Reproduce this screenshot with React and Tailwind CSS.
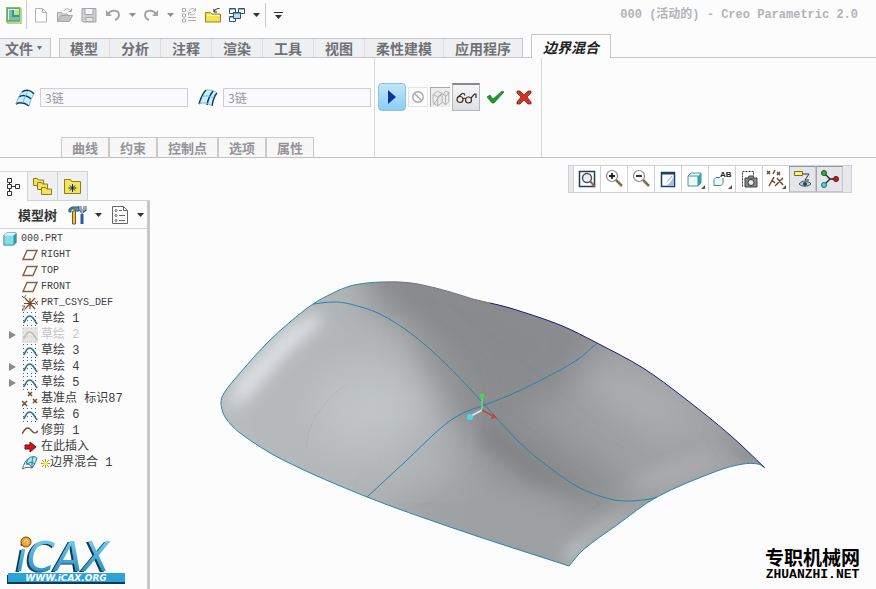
import { clsx } from 'clsx';

const Icon = ({ size = 16, children, className }) => (
  <svg
    width={size}
    height={size}
    viewBox="0 0 16 16"
    fill="none"
    stroke="currentColor"
    className={clsx('shrink-0', className)}
    aria-hidden="true"
  >
    {children}
  </svg>
);

const Caret = ({ label, className }) => (
  <button type="button" aria-label={label} className={clsx('flex w-3.5 h-6 items-center justify-center', className)}>
    <svg width="7" height="4" viewBox="0 0 7 4" fill="currentColor" aria-hidden="true">
      <path d="M0 0h7L3.5 4z" />
    </svg>
  </button>
);

const ToolButton = ({ label, children }) => (
  <button type="button" aria-label={label} className="flex w-6 h-6 items-center justify-center">
    {children}
  </button>
);

/* ---------- Title bar ---------- */

const AppLogo = () => (
  <svg width="16" height="17" viewBox="0 0 16 17" className="shrink-0" aria-hidden="true">
    <path d="M0 0h14l2 2v15H2l-2-2z" fill="#8cc152" />
    <path d="M14 1l2 1v15H3l-2-2h13z" fill="#b5d98b" />
    <rect x="1" y="1" width="13" height="13" fill="#5f9fae" />
    <rect x="2" y="2" width="11" height="11" fill="#e7f3d0" />
    <path d="M3 3h3v7h7v3H3z" fill="#7cc0a0" />
    <rect x="6" y="3" width="7" height="7" fill="#2f93b4" />
    <rect x="8" y="3" width="5" height="5" fill="#c9e26c" />
  </svg>
);

const TitleBar = () => (
  <header className="flex h-[30px] items-center pl-1.5 pr-[18px]">
    <AppLogo />
    <span className="ml-1 mr-0.5 h-7 w-px bg-[#c9cbce]" />
    <ToolButton label="新建">
      <Icon className="text-[#b3b3b6]">
        <path d="M2.500 1.500h7l4 4v9.500h-11z" fill="#fff" />
        <path d="M9.500 1.500v4h4" />
      </Icon>
    </ToolButton>
    <ToolButton label="打开">
      <Icon className="text-[#a9a9ac]">
        <path d="M.5 14.500v-9h4l1 1.500h5v2" fill="#d5d5d8" />
        <path d="M.5 14.500l3-6h12l-3 6z" fill="#c3c3c6" />
        <path d="M7 4c1-3 5-3 7 0M14.500 1.500V4.500h-3" />
      </Icon>
    </ToolButton>
    <ToolButton label="保存">
      <Icon className="text-[#a6a6a9]">
        <path d="M1 1.500h14v13.500H2L1 14z" fill="#d0d0d3" />
        <path d="M4 1.500h8v6H4z" fill="#f6f6f8" />
        <path d="M5 10.500h7v4H5z" fill="#e8e8ea" />
      </Icon>
    </ToolButton>
    <ToolButton label="撤消">
      <Icon className="text-[#a6a6a9]">
        <path d="M3 7c3-5 11-4 11 1 0 3-2 4-4 5" strokeWidth="2" />
        <path d="M1 3v6h6z" fill="currentColor" stroke="none" />
      </Icon>
    </ToolButton>
    <Caret label="撤消列表" className="text-[#8f8f92]" />
    <ToolButton label="重做">
      <Icon className="text-[#a6a6a9]">
        <path d="M13 7C10 2 2 3 2 8c0 3 2 4 4 5" strokeWidth="2" />
        <path d="M15 3v6H9z" fill="currentColor" stroke="none" />
      </Icon>
    </ToolButton>
    <Caret label="重做列表" className="text-[#8f8f92]" />
    <ToolButton label="重新生成">
      <Icon className="text-[#adadb0]">
        <path d="M1.500 1.500h3v3h-3zM1.500 7h3v3h-3zM1.500 12h3v3h-3zM7 10.500h8M7 13.500h8" />
        <path d="M8 4c1-3 5-3 6-1M14.500 1v3h-3M14 6c-1 2.500-5 2.500-6 .5M7.500 8.500v-3h3" />
      </Icon>
    </ToolButton>
    <ToolButton label="关闭">
      <Icon className="text-[#9a8424]">
        <path d="M.5 15V5.500h5L7 7h8.500v8z" fill="#f6e04d" />
        <path d="M2 8.500h12" stroke="#fff7a8" />
        <path d="M9 4.500c1-2 3-3 5.500-3M9 2v3h3" stroke="#222" />
      </Icon>
    </ToolButton>
    <ToolButton label="窗口">
      <Icon className="text-[#2e5577]">
        <path d="M.5 1.500h6v5h-6z" fill="#fff" />
        <path d="M9.500 1.500h6v5h-6z" fill="#fff" />
        <path d="M.5 9.500h6v5h-6z" fill="#fff" />
        <path d="M.5 2h6M9.500 2h6M.5 10h6" />
        <path d="M4.500 5.500h7v6h-7z" fill="#b9dcf2" />
        <path d="M4.500 6h7" />
      </Icon>
    </ToolButton>
    <Caret label="窗口列表" className="text-[#333]" />
    <span className="mx-0.5 h-6 w-px bg-[#c9cbce]" />
    <button type="button" aria-label="自定义快速访问工具栏" className="flex h-6 w-5 items-center justify-center text-[#333]">
      <svg width="9" height="7" viewBox="0 0 9 7" fill="currentColor" aria-hidden="true">
        <path d="M0 0h9v1H0zM1 3h7L4.500 7z" />
      </svg>
    </button>
    <h1 className="ml-auto whitespace-nowrap font-['Liberation_Mono','Noto_Sans_CJK_SC',monospace] text-xs font-bold text-[#b4b4b8]">
      000 (活动的) - Creo Parametric 2.0
    </h1>
  </header>
);

/* ---------- Ribbon ---------- */

const ribbonTabs = ['模型', '分析', '注释', '渲染', '工具', '视图', '柔性建模', '应用程序'];
const panelTabs = ['曲线', '约束', '控制点', '选项', '属性'];

const RibbonTabs = () => (
  <nav className="flex h-7 items-end border-b border-[#c4c6c8] text-sm font-bold text-[#707075]">
    <button type="button" className="flex h-[19px] items-center gap-1 border border-b-0 border-l-0 border-[#c4c6c8] bg-[#eff0f2] pl-[5px] pr-2 leading-none">
      文件
      <svg width="5" height="4" viewBox="0 0 5 4" fill="currentColor" aria-hidden="true">
        <path d="M0 0h5L2.500 4z" />
      </svg>
    </button>
    <div className="ml-2 flex border border-b-0 border-[#c4c6c8]">
      {ribbonTabs.map((tab) => (
        <button
          key={tab}
          type="button"
          className="h-[18px] whitespace-nowrap border-l border-[#dcdee0] bg-[#eff0f2] px-[11px] leading-none first:border-l-0 first:pl-2.5"
        >
          {tab}
        </button>
      ))}
    </div>
    <button
      type="button"
      className="-mb-px ml-2 h-6 whitespace-nowrap border border-b-0 border-[#c4c6c8] bg-[#fcfcfc] px-[11px] leading-none italic text-[#222]"
    >
      边界混合
    </button>
  </nav>
);

const ChainIcon = ({ flip }) => (
  <svg width="20" height="18" viewBox="0 0 20 18" fill="none" className="shrink-0" aria-hidden="true">
    {flip ? (
      <>
        <path d="M1 15C3 8 5 4 8 1c4 0 8 0 11 3-3 3-4 7-5 13-3-3-8-4-13-2z" fill="#c5f1fa" />
        <path d="M1 15C3 8 5 4 8 1M9 16c1-6 3-10 6-14M14 17c1-6 2-10 5-13" stroke="#123b5c" strokeWidth="1.500" />
        <path d="M8 1c4 0 8 0 11 3M4 8c4-2 8-1 12 1M1 15c5-2 9-1 13 2" stroke="#7db6c8" />
      </>
    ) : (
      <>
        <path d="M1 15c2-6 4-11 6-13 4-2 10-2 12 3-2 3-4 7-5 12-4-3-8-4-13-2z" fill="#c5f1fa" />
        <path d="M7 3c4-3 9-2 12 2M4 8c4-3 9-1 12 2M1 15c4-2 9-1 13 2" stroke="#123b5c" strokeWidth="1.500" />
        <path d="M1 15C3 9 5 5 7 3M8 14c1-5 3-9 5-12M14 17c1-5 3-9 5-12" stroke="#7db6c8" />
      </>
    )}
  </svg>
);

const ChainField = ({ id, label, flip }) => (
  <div className="flex flex-1 items-center gap-[5px]">
    <label htmlFor={id} aria-label={label}>
      <ChainIcon flip={flip} />
    </label>
    <input
      id={id}
      defaultValue="3链"
      className="h-[19px] w-full min-w-0 border border-[#cdcfd2] bg-[#faf9fe] px-1 font-['Noto_Sans_CJK_SC',sans-serif] text-xs leading-none text-[#98989c]"
    />
  </div>
);

const Dashboard = () => (
  <section className="flex h-[100px] border-b border-[#bfc1c3]">
    <div className="flex w-[375px] flex-col justify-between border-r border-[#d6d8da]">
      <div className="flex gap-2.5 pl-[15px] pr-[3px] pt-[30px]">
        <ChainField id="chain-first" label="第一方向链" />
        <ChainField id="chain-second" label="第二方向链" flip />
      </div>
      <div className="flex pl-[61px]">
        {panelTabs.map((tab) => (
          <button
            key={tab}
            type="button"
            className="h-5 whitespace-nowrap border border-b-0 border-[#c8cacc] bg-[#f7f7f8] px-[10px] text-[13px] font-bold leading-none text-[#949498]"
          >
            {tab}
          </button>
        ))}
      </div>
    </div>
    <div className="flex w-[167px] items-start border-r border-[#d6d8da] pl-[3px] pt-[25px]">
      <button type="button" aria-label="继续" className="flex size-7 items-center justify-center rounded-sm border border-[#8cc4e8] bg-gradient-to-b from-[#c3e5fa] to-[#8ccdf4]">
        <svg width="8" height="14" viewBox="0 0 8 14" aria-hidden="true">
          <path d="M0 0l8 7-8 7z" fill="#0c3590" />
        </svg>
      </button>
      <button type="button" aria-label="无预览" className="mt-1 ml-0.5 flex size-5 items-center justify-center border border-[#e3e3e5] text-[#a3a3a6]">
        <Icon size={14}>
          <circle cx="8" cy="8" r="6" strokeWidth="1.500" />
          <path d="M4 4l8 8" strokeWidth="1.500" />
        </Icon>
      </button>
      <button type="button" aria-label="分离" className="mt-1 ml-0.5 flex size-5 items-center justify-center border border-r-0 border-b-0 border-[#a9a9ac] bg-[#ededee] text-[#aaaaad]">
        <Icon size={18}>
          <path d="M1 5l4-3 4 2v8l-4 3-4-3zM1 5l4 2 4-3M5 7v8M10 5l2-3 3 1v8l-3 3-3-3M10 5l3 1 2-3M12 6v8M1 14L9 4" strokeWidth=".8" />
        </Icon>
      </button>
      <button type="button" aria-label="预览" className="ml-0.5 flex size-7 items-center justify-center border border-t-2 border-[#b5b6ba] border-t-[#88888c] bg-gradient-to-b from-[#f7f7f8] to-[#dedfe3]">
        <svg width="21" height="12" viewBox="0 0 21 12" fill="none" stroke="#3d2e22" strokeWidth="1.200" aria-hidden="true">
          <circle cx="4" cy="7.500" r="3" />
          <circle cx="12.500" cy="8" r="3" />
          <path d="M7 7c.5-1 2-1 2.500 0M1.500 5.500L6 1.500h2l1 2M15 6l3.500-4h1.500v4" />
        </svg>
      </button>
      <button type="button" aria-label="确定" className="ml-px flex size-7 items-center justify-center">
        <svg width="17" height="14" viewBox="0 0 17 14" aria-hidden="true">
          <path d="M0 7l3-2 3 4 9-8 2 1L7 13H5z" fill="#1f9a2e" stroke="#0c6a1a" strokeWidth=".6" />
        </svg>
      </button>
      <button type="button" aria-label="取消" className="ml-px flex size-7 items-center justify-center">
        <svg width="16" height="15" viewBox="0 0 16 15" aria-hidden="true">
          <path d="M1 1h3l4 4 4-4h3v2l-4 4 4 5v2h-3L8 10l-4 4H1v-2l4-5-4-4z" fill="#d23324" stroke="#8c1c14" strokeWidth=".8" />
        </svg>
      </button>
    </div>
  </section>
);

/* ---------- Model tree ---------- */

const CubeIcon = () => (
  <Icon size={14}>
    <path d="M1 4l3-3h11v11l-3 3H1z" fill="#86dde6" stroke="#3c7d8a" />
    <path d="M12 4l3-3v11l-3 3z" fill="#2e98a8" stroke="none" />
    <path d="M1 4l3-3h11l-3 3z" fill="#d3f7fa" stroke="none" />
  </Icon>
);

const PlaneIcon = () => (
  <Icon>
    <path d="M5 3.500h10L11 12.500H1z" fill="#fff" stroke="#8a6142" strokeWidth="1.400" />
  </Icon>
);

const CsysIcon = () => (
  <Icon>
    <path d="M3 3l10 11M13 3L3 14M2 8.500h11M8 3v11" stroke="#7a4a28" strokeWidth="1.200" />
    <path d="M0 1l2 2 2-3M13 6l3 4M16 6l-3 4M0 11h3l-3 4h3" stroke="#444" strokeWidth=".8" />
  </Icon>
);

const SketchIcon = ({ muted }) => (
  <Icon className={muted ? 'bg-[#e6e6e3]' : ''}>
    <path
      d="M1 1.500h15M1 5.500h15M1 9.500h15M1 14.500h15"
      stroke={muted ? '#c9c9c6' : '#3b6688'}
      strokeDasharray="1 3"
    />
    <path d="M1.500 12C4 9 4 5.500 7 5c4-.5 5 4 8 8" stroke={muted ? '#bcbcb9' : '#2c6f98'} strokeWidth="1.600" />
  </Icon>
);

const PointsIcon = () => (
  <Icon>
    <path d="M6 1l4 4M10 1L6 5M0 10l5 5M5 10l-5 5M11 8l4 4M15 8l-4 4" stroke="#7a4a28" strokeWidth="1.500" />
  </Icon>
);

const TrimIcon = () => (
  <Icon>
    <path d="M0 11C2 7 5 3 8 6s4 6 8 2" stroke="#73512f" strokeWidth="1.400" />
  </Icon>
);

const InsertIcon = () => (
  <Icon>
    <path d="M3 6h5V3l6 5-6 5v-3H3z" fill="#d01616" stroke="#721010" />
  </Icon>
);

const BlendIcon = () => (
  <Icon>
    <path d="M6 4c3-3 7-3 9-1-1 3-2 6-5 10-1-3-3-4-6-4z" fill="#9fe8ee" stroke="#3f7884" />
    <path d="M.5 14C2 9 3 6 6 4M.5 14c3-2 6-2 9.500-1M5 9c3-2 5-2 8 0M10 13c0-5 0-8 1-11" stroke="#3f7884" />
  </Icon>
);

const features = [
  { name: 'RIGHT', icon: <PlaneIcon />, latin: true },
  { name: 'TOP', icon: <PlaneIcon />, latin: true },
  { name: 'FRONT', icon: <PlaneIcon />, latin: true },
  { name: 'PRT_CSYS_DEF', icon: <CsysIcon />, latin: true },
  { name: '草绘 1', icon: <SketchIcon /> },
  { name: '草绘 2', icon: <SketchIcon muted />, expandable: true, muted: true },
  { name: '草绘 3', icon: <SketchIcon /> },
  { name: '草绘 4', icon: <SketchIcon />, expandable: true },
  { name: '草绘 5', icon: <SketchIcon />, expandable: true },
  { name: '基准点 标识87', icon: <PointsIcon /> },
  { name: '草绘 6', icon: <SketchIcon /> },
  { name: '修剪 1', icon: <TrimIcon /> },
  { name: '在此插入', icon: <InsertIcon /> },
  { name: '边界混合 1', icon: <BlendIcon />, pending: true },
];

const TreeRow = ({ feature }) => (
  <li className={clsx('flex h-4 items-center pl-[7px]', feature.muted ? 'text-[#c4c4c6]' : 'text-[#3c3c40]')}>
    {feature.expandable ? (
      <button type="button" aria-label="展开" className="flex w-[15px] items-center pl-0.5">
        <svg width="7" height="8" viewBox="0 0 7 8" fill="#8c8c8f" aria-hidden="true">
          <path d="M0 0l7 4-7 4z" />
        </svg>
      </button>
    ) : (
      <span className="w-[15px]" />
    )}
    {feature.icon}
    <span className={clsx('ml-[3px] flex items-center whitespace-nowrap leading-4', feature.latin && 'text-[10px]')}>
      {feature.pending && (
        <svg width="9" height="9" viewBox="0 0 9 9" stroke="#b59a1c" aria-hidden="true">
          <path d="M4.500 0v9M0 4.500h9M1 1l7 7M8 1L1 8" />
          <circle cx="4.500" cy="4.500" r="2" fill="#ffe840" stroke="none" />
        </svg>
      )}
      {feature.name}
    </span>
  </li>
);

const FolderShape = ({ x = 0, y = 0 }) => (
  <path
    transform={`translate(${x} ${y})`}
    d="M.5 8.500v-7h4l1 1.500h5v5.500z"
    fill="#f5e35a"
    stroke="#8f7a1e"
  />
);

const IcaxLogo = () => (
  <svg width="124" height="60" viewBox="0 0 124 60" className="ml-1" role="img" aria-label="iCAX">
    <defs>
      <linearGradient id="icaxFill" x1="0" y1="0" x2="0" y2="1">
        <stop offset="0" stopColor="#7fd6f4" />
        <stop offset="1" stopColor="#1684bd" />
      </linearGradient>
      <filter id="icaxShadow" x="-10%" y="-10%" width="120%" height="130%">
        <feDropShadow dx="-2" dy="1" stdDeviation="0.4" floodColor="#17384c" />
      </filter>
    </defs>
    <text
      x="12"
      y="46"
      fill="url(#icaxFill)"
      fontFamily="'DejaVu Sans', sans-serif"
      fontStyle="italic"
      fontSize="40"
      filter="url(#icaxShadow)"
    >
      iCAX
    </text>
    <circle cx="22" cy="17" r="5" fill="#f3a22b" stroke="#7b4210" />
    <path d="M20 17a2 2 0 1 1 4 0c0 2-2 1-2 0" fill="none" stroke="#fff0cf" strokeWidth=".8" />
    <rect x="3" y="50" width="118" height="9" fill="#17384c" />
    <rect x="4" y="48" width="117" height="9" fill="#2ba3d8" />
    <text
      x="62"
      y="56"
      textAnchor="middle"
      fill="#fff"
      fontFamily="'DejaVu Sans', sans-serif"
      fontStyle="italic"
      fontWeight="700"
      fontSize="9"
    >
      WWW.iCAX.ORG
    </text>
  </svg>
);

const ModelTree = () => (
  <aside className="flex w-[150px] shrink-0 flex-col">
    <div className="mt-[13px] flex h-[30px]">
      <button type="button" aria-label="模型树" className="flex w-[27px] items-center justify-center border-t border-[#d4d6d8] text-[#333]">
        <svg width="15" height="20" viewBox="0 0 15 20" fill="none" stroke="currentColor" aria-hidden="true">
          <path d="M1.500 1.500h4v4h-4zM1.500 7.500h4v4h-4zM1.500 14.500h4v4h-4zM9.500 7.500h4v4h-4zM3.500 5.500v2M3.500 11.500v3M5.500 9.500h4" />
        </svg>
      </button>
      <button type="button" aria-label="文件夹浏览器" className="flex w-[31px] items-center justify-center border border-[#cfd1d3] bg-[#eff0f2]">
        <svg width="20" height="19" viewBox="0 0 20 19" aria-hidden="true">
          <FolderShape />
          <FolderShape x={4} y={4} />
          <FolderShape x={8} y={9} />
        </svg>
      </button>
      <button type="button" aria-label="收藏夹" className="flex w-[30px] items-center justify-center border border-l-0 border-[#cfd1d3] bg-[#eff0f2]">
        <svg width="17" height="16" viewBox="0 0 17 16" aria-hidden="true">
          <path d="M.5 15.500V1.500h6l1 2h9v12z" fill="#f5e35a" stroke="#8f7a1e" />
          <path d="M8.500 6v8M4.500 10h8M6 7.500l5 5M11 7.500l-5 5" stroke="#1a2c4a" />
        </svg>
      </button>
      <span className="flex-1 border-b border-[#cfd1d3]" />
    </div>
    <div className="flex flex-1 flex-col border-r-[3px] border-[#c6c7ca]">
      <div className="flex h-7 items-center border-b border-[#cfd1d3] pl-[18px]">
        <h2 className="text-[13px] font-bold leading-none text-[#333]">模型树</h2>
        <button type="button" aria-label="设置" className="ml-2.5">
          <svg width="20" height="20" viewBox="0 0 20 20" fill="none" aria-hidden="true">
            <path d="M2 7V4l3-2h7v4H8V4H4v3z" fill="#5b98ac" stroke="#2b5263" />
            <path d="M5.500 6h3v13h-3z" fill="#edbd4e" stroke="#83551b" />
            <path d="M15 9v10M13 1v3l2 3 3-2V1" stroke="#2b5b9c" strokeWidth="3" />
            <path d="M13 1v3l2 2 3-2V1M15 6v3" stroke="#a3a3a6" strokeWidth="2" />
          </svg>
        </button>
        <Caret label="设置列表" className="ml-1 text-[#333]" />
        <button type="button" aria-label="显示" className="ml-1.5">
          <svg width="18" height="20" viewBox="0 0 18 20" fill="none" stroke="#666" aria-hidden="true">
            <path d="M1.500 1.500h11l4 4v13h-15z" fill="#fff" />
            <path d="M12.500 1.500v4h4M8 5.500h3M8 10.500h6M8 15.500h6" />
            <circle cx="5" cy="5.500" r="1" />
            <circle cx="5" cy="10.500" r="1" />
            <circle cx="5" cy="15.500" r="1" />
          </svg>
        </button>
        <Caret label="显示列表" className="ml-1 text-[#333]" />
      </div>
      <ul className="pt-0.5 font-['Liberation_Mono','Noto_Sans_CJK_SC',monospace] text-xs">
        <li className="flex h-4 items-center gap-1 pl-[3px] text-[10px] text-[#3c3c40]">
          <CubeIcon />
          000.PRT
        </li>
        {features.map((feature) => (
          <TreeRow key={feature.name} feature={feature} />
        ))}
      </ul>
      <div className="mt-auto pb-1">
        <IcaxLogo />
      </div>
    </div>
  </aside>
);

/* ---------- Graphics area ---------- */

const Corner = () => <path d="M20 20v-4l-4 4z" fill="#555" stroke="none" />;

const viewTools = [
  {
    label: '重新调整',
    art: (
      <>
        <path d="M2.500 2.500h15v15h-15z" fill="#fff" stroke="#1c3a5e" strokeWidth="1.500" />
        <circle cx="10" cy="9" r="4.500" stroke="#555" strokeWidth="1.500" fill="#e8f1f7" />
        <path d="M13 12l5 6" stroke="#8a6a45" strokeWidth="2" />
      </>
    ),
  },
  {
    label: '放大',
    art: (
      <>
        <circle cx="8" cy="7" r="5.500" stroke="#888" strokeWidth="1.200" fill="#fff" />
        <path d="M5 7h6M8 4v6" stroke="#222" strokeWidth="1.800" />
        <path d="M12 11l6 6" stroke="#8a6a45" strokeWidth="2.500" />
      </>
    ),
  },
  {
    label: '缩小',
    art: (
      <>
        <circle cx="8" cy="7" r="5.500" stroke="#888" strokeWidth="1.200" fill="#fff" />
        <path d="M5 7h6" stroke="#222" strokeWidth="1.800" />
        <path d="M12 11l6 6" stroke="#8a6a45" strokeWidth="2.500" />
      </>
    ),
  },
  {
    label: '重画',
    art: (
      <>
        <path d="M3.500 3.500h13v14h-13z" fill="#fff" stroke="#1f3d63" strokeWidth="1.500" />
        <path d="M16 6v11H6c5-1 8-5 10-11z" fill="#9dc0e6" />
        <path d="M3 4.500h14" stroke="#1f3d63" strokeWidth="2" />
        <path d="M9 13l5-6" stroke="#8aa5c4" />
      </>
    ),
  },
  {
    label: '显示样式',
    art: (
      <>
        <path d="M3 7l3-3h10v10l-3 3H3z" fill="#e8fbfc" stroke="#5b8f96" />
        <path d="M13 7l3-3v10l-3 3z" fill="#1ea9b5" />
        <path d="M3 7h10v10" stroke="#5b8f96" />
        <Corner />
      </>
    ),
  },
  {
    label: '已保存方向',
    art: (
      <>
        <path d="M2 10.500L4 8.500h7v6l-2 2H2z" fill="#e8fbfc" stroke="#4b8890" />
        <path d="M8 1h11v8H8z" fill="#fff" />
        <text x="8" y="8" fontSize="8" fontWeight="700" fontFamily="'Liberation Sans', sans-serif" fill="#222">AB</text>
        <Corner />
      </>
    ),
  },
  {
    label: '视图管理器',
    art: (
      <>
        <path d="M3.500 17.500v-15h11v5" stroke="#333" strokeDasharray="2 1" />
        <path d="M6 9h12v9H6z" fill="#8b887e" stroke="#444" />
        <path d="M9 9l1-2h4l1 2" fill="#8b887e" stroke="#444" />
        <circle cx="12" cy="13.500" r="3" fill="#d9f4f7" stroke="#333" />
      </>
    ),
  },
  {
    label: '基准显示过滤器',
    art: (
      <>
        <path d="M1 2l3 3M4 2L1 5M9 1L7 5M11 3l3 3M14 3l-3 3M3 17l5-9M6 11l3 3M9 17l8-8M11 9l6 7" stroke="#6e4a2c" strokeWidth="1.500" />
        <Corner />
      </>
    ),
  },
  {
    label: '注释显示',
    pressed: true,
    art: (
      <>
        <path d="M1.500 2.500h8v4h-8z" fill="#fdf279" stroke="#7a6a1c" />
        <path d="M10 5h6l-4 6h4" stroke="#333" />
        <path d="M6 15c3-4 9-4 12 0-3 3-9 3-12 0z" fill="#a9c7d2" stroke="#3f5a66" />
        <circle cx="12" cy="15" r="2" fill="#26414e" />
      </>
    ),
  },
  {
    label: '旋转中心',
    pressed: true,
    art: (
      <>
        <path d="M4 4l6 6h6M10 10l-6 6" stroke="#222" strokeWidth="1.300" />
        <circle cx="4" cy="4" r="2.500" fill="#3aa63a" stroke="#1d5c1d" />
        <circle cx="16" cy="10" r="2.500" fill="#b8231c" stroke="#5e100c" />
        <circle cx="4" cy="16" r="2.500" fill="#52cde2" stroke="#246f7d" />
      </>
    ),
  },
];

const ViewToolbar = () => (
  <div className="mr-6 mt-[7px] flex h-7 self-end border border-[#cfd1d6] bg-[#e7e8ec] pl-1 pr-2" role="toolbar" aria-label="图形工具栏">
    {viewTools.map((tool) => (
      <button
        key={tool.label}
        type="button"
        aria-label={tool.label}
        className={clsx(
          'flex w-[27px] items-center justify-center border-l',
          tool.pressed
            ? 'border border-[#c4c5ca] border-t-[#95969c] border-l-[#a5a6ac] bg-[#e4e5ea]'
            : 'border-[#cfd1d6] bg-white',
        )}
      >
        <svg width="20" height="20" viewBox="0 0 20 20" fill="none" aria-hidden="true">
          {tool.art}
        </svg>
      </button>
    ))}
  </div>
);

const distance = (a, b) => Math.hypot(b[0] - a[0], b[1] - a[1]) || 1;

// Spline through the points as cubic segments; handles scale with the chord
// so unevenly spaced points stay smooth
const spline = (points) => {
  const tangents = points.map((p, i) => {
    const prev = points[i - 1] || p;
    const next = points[i + 1] || p;
    const span = (i > 0 ? distance(prev, p) : 0) + (i < points.length - 1 ? distance(p, next) : 0);
    return [(next[0] - prev[0]) / span, (next[1] - prev[1]) / span];
  });
  return points
    .slice(1)
    .map((p, i) => {
      const from = points[i];
      const reach = distance(from, p) / 3;
      const c1 = [from[0] + tangents[i][0] * reach, from[1] + tangents[i][1] * reach];
      const c2 = [p[0] - tangents[i + 1][0] * reach, p[1] - tangents[i + 1][1] * reach];
      return `C${c1} ${c2} ${p}`;
    })
    .join('');
};

const curve = (points) => `M${points[0]}${spline(points)}`;

const leftEdge = [
  [569, 566], [510, 547], [450, 527], [367, 497], [283, 460], [240, 433], [225, 417], [221, 403],
  [224, 393], [240, 373], [267, 343], [290, 322], [313, 304], [333, 293], [350, 286], [367, 283], [382, 282],
];
const topEdge = [[382, 282], [400, 282], [418, 284], [447, 291], [473, 299], [490, 303]];
const rightEdge = [[490, 303], [510, 308], [560, 325], [597, 343], [643, 368], [683, 397], [730, 435], [765, 468]];
const frontEdge = [[765, 468], [758, 464], [743, 464], [717, 471], [657, 497], [617, 525], [583, 550], [569, 566]];
const longCurve = [
  [313, 304], [333, 302], [350, 304], [380, 314], [413, 335], [447, 365], [482, 402],
  [520, 443], [550, 468], [580, 488], [610, 499], [630, 501], [650, 499], [657, 497],
];
const crossCurve = [
  [597, 343], [577, 360], [543, 379], [510, 395], [482, 406], [463, 413], [447, 423],
  [433, 435], [407, 460], [367, 497],
];

const outline = `${curve(leftEdge)}${spline(topEdge)}${spline(rightEdge)}${spline(frontEdge)}Z`;

const SurfaceModel = () => (
  <svg viewBox="150 193 726 396" className="block w-full" role="img" aria-label="边界混合曲面">
    <defs>
      <clipPath id="surface">
        <path d={outline} />
      </clipPath>
      <linearGradient id="base" gradientUnits="userSpaceOnUse" x1="240" y1="400" x2="700" y2="400">
        <stop offset="0" stopColor="#b8bbbe" />
        <stop offset=".35" stopColor="#adb0b2" />
        <stop offset=".55" stopColor="#98999c" />
        <stop offset="1" stopColor="#a0a2a4" />
      </linearGradient>
      <filter id="soft" x="-50%" y="-50%" width="200%" height="200%">
        <feGaussianBlur stdDeviation="16" />
      </filter>
      <filter id="softer" x="-50%" y="-50%" width="200%" height="200%">
        <feGaussianBlur stdDeviation="24" />
      </filter>
      <filter id="tight" x="-50%" y="-50%" width="200%" height="200%">
        <feGaussianBlur stdDeviation="8" />
      </filter>
    </defs>
    <g clipPath="url(#surface)">
      <path d={outline} fill="url(#base)" />
      <path d="M360 250L500 270L610 330L560 390L500 420L460 380L420 335L370 300z" fill="#898a8d" filter="url(#soft)" />
      <path d="M420 330L460 360L520 410L570 450L630 490L590 510L520 480L460 420L420 365z" fill="#8b8c8f" filter="url(#soft)" />
      <path d="M380 500L460 480L560 510L580 570L480 550z" fill="#9fa1a4" filter="url(#soft)" />
      <ellipse cx="370" cy="410" rx="62" ry="50" fill="#c0c4c6" filter="url(#softer)" />
      <ellipse cx="420" cy="462" rx="40" ry="20" fill="#b4b7b9" filter="url(#softer)" />
      <path d="M488 418L540 462L590 496L530 480L480 440z" fill="#838487" filter="url(#tight)" />
      <path d="M225 408L240 378L285 330L318 312L322 322L285 355L245 400z" fill="#e0e4e8" filter="url(#tight)" />
      <ellipse cx="640" cy="400" rx="60" ry="24" fill="#aaadb0" filter="url(#soft)" transform="rotate(28 640 400)" />
      <ellipse cx="675" cy="472" rx="45" ry="10" fill="#aaacae" filter="url(#tight)" transform="rotate(-18 675 472)" />
      <path d="M715 425L775 475L745 460z" fill="#77787e" filter="url(#tight)" />
      <path d="M569 570L590 540L645 505L600 525L565 550z" fill="#c3c7c9" filter="url(#tight)" />
      <path d="M345 385C325 400 300 430 309 450" fill="none" stroke="#a6a9ac" strokeOpacity=".3" />
    </g>
    <g fill="none" strokeWidth="1">
      <path d={curve(leftEdge)} stroke="#2288a8" />
      <path d={curve(topEdge)} stroke="#77787c" />
      <path d={curve(rightEdge)} stroke="#1a1a7a" />
      <path d={curve(frontEdge)} stroke="#2288a8" />
      <path d={curve(longCurve)} stroke="#2583ae" />
      <path d={curve(crossCurve)} stroke="#2583ae" />
    </g>
    {/* Spin centre */}
    <path d="M482 410V397" stroke="#6be06b" strokeWidth="1.500" />
    <path d="M482 410L471 416" stroke="#c9f2f5" strokeWidth="1.500" />
    <path d="M482 410L493 416" stroke="#c2454a" strokeWidth="1.500" />
    <circle cx="482" cy="396" r="2.500" fill="#4fd04f" />
    <circle cx="470" cy="417" r="3" fill="#45dbe8" />
    <path d="M493 413l4 5-6 1z" fill="#c2454a" />
  </svg>
);

const GraphicsArea = () => (
  <main className="relative flex min-w-0 flex-1 flex-col">
    <ViewToolbar />
    <SurfaceModel />
    <div className="absolute bottom-1.5 right-4 text-center text-black">
      <p className="text-[19px] font-bold leading-5">专职机械网</p>
      <p className="font-['Liberation_Mono',monospace] text-[13px] font-bold leading-4">ZHUANZHI.NET</p>
    </div>
  </main>
);

const App = () => (
  <div className="flex min-h-screen flex-col bg-[#fcfcfc] font-['Noto_Sans_CJK_SC',sans-serif]">
    <TitleBar />
    <RibbonTabs />
    <Dashboard />
    <div className="flex flex-1">
      <ModelTree />
      <GraphicsArea />
    </div>
  </div>
);

export default App;
